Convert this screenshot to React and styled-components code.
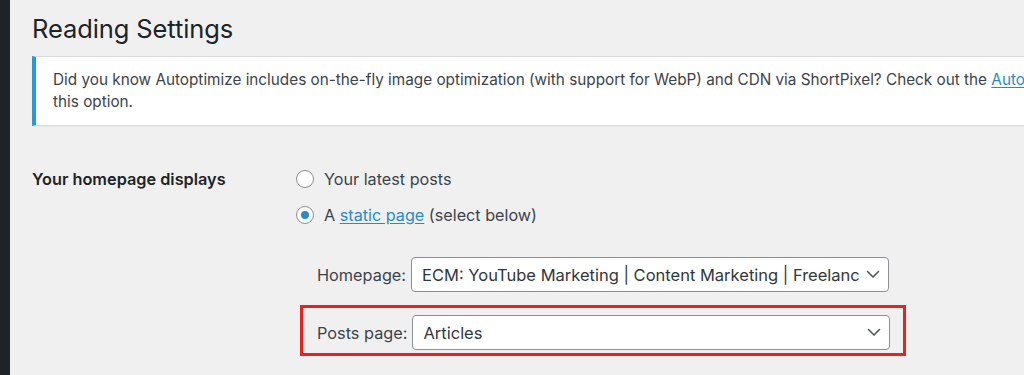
import React from 'react';
import styled, { createGlobalStyle } from 'styled-components';

const GlobalStyle = createGlobalStyle`
  html, body {
    margin: 0;
    padding: 0;
    background: #f0f0f1;
    overflow: hidden;
  }
  body {
    font-family: Inter, 'Liberation Sans', sans-serif;
    color: #3c434a;
  }
`;

const Page = styled.div`
  display: flex;
  width: 1400px;
  min-height: 375px;
  background: #f0f0f1;
`;

const Sidebar = styled.div`
  width: 10px;
  flex-shrink: 0;
  background: #1d2327;
`;

const Content = styled.main`
  flex: 1;
  padding: 13px 20px 0 22px;
`;

const Title = styled.h1`
  margin: 0;
  font-size: 25.5px;
  font-weight: 400;
  line-height: 32px;
  color: #1d2327;
  letter-spacing: -0.1px;
`;

const Notice = styled.div`
  margin-top: 11px;
  background: #fff;
  border: 1px solid #dcdcde;
  border-left: 4px solid #2a9bd1;
  box-shadow: 0 1px 1px rgba(0, 0, 0, 0.04);
  padding: 12px 17px 12px 17px;
  font-size: 15.3px;
  line-height: 22px;
  color: #3c434a;
  white-space: nowrap;
`;

const Link = styled.a`
  color: #2a8bc4;
  text-decoration: underline;
  text-underline-offset: 2px;
`;

const FormTable = styled.div`
  display: grid;
  grid-template-columns: 264px 1fr;
  margin-top: 42px;
`;

const RowLabel = styled.div`
  font-size: 16.3px;
  font-weight: 600;
  color: #1d2327;
  line-height: 22px;
`;

const Field = styled.div`
  display: flex;
  flex-direction: column;
`;

const RadioRow = styled.label`
  display: flex;
  align-items: center;
  gap: 10px;
  height: 22px;
  margin-bottom: ${(p) => (p.last ? '0' : '14px')};
  font-size: 16.2px;
  color: #3c434a;
`;

const Radio = styled.span`
  width: 16px;
  height: 16px;
  border-radius: 50%;
  border: 1px solid #8c8f94;
  background: #fff;
  display: flex;
  align-items: center;
  justify-content: center;
  flex-shrink: 0;

  &::after {
    content: '';
    display: ${(p) => (p.checked ? 'block' : 'none')};
    width: 8px;
    height: 8px;
    border-radius: 50%;
    background: #2a8bc4;
  }
`;

const PageSelects = styled.div`
  margin-top: 31px;
  margin-left: 21px;
`;

const SelectRow = styled.div`
  display: flex;
  align-items: center;
  gap: 5px;
  font-size: 16.3px;
  color: #3c434a;
`;

const Highlight = styled.div`
  box-sizing: border-box;
  margin: 13px 0 0 -17px;
  width: 606px;
  border: 3px solid #e8231f;
  padding: 7px 0 3px 14px;
`;

const Select = styled.div`
  display: flex;
  align-items: center;
  width: ${(p) => p.width}px;
  height: 35px;
  box-sizing: border-box;
  background: #fff;
  border: 1px solid #8c8f94;
  border-radius: 4px;
  padding: 0 8px 0 10px;
  font-size: 16.5px;
  color: #32373c;
`;

const SelectText = styled.span`
  flex: 1;
  overflow: hidden;
  white-space: nowrap;
`;

const Chevron = () => (
  <svg width="14" height="9" viewBox="0 0 14 9" style={{ marginLeft: 6, flexShrink: 0 }}>
    <path d="M1.5 1.5 L7 7 L12.5 1.5" fill="none" stroke="#50575e" strokeWidth="1.6" strokeLinecap="round" strokeLinejoin="round" />
  </svg>
);

export default function App() {
  return (
    <>
      <GlobalStyle />
      <Page>
        <Sidebar />
        <Content>
          <Title>Reading Settings</Title>
          <Notice>
            Did you know Autoptimize includes on-the-fly image optimization (with support for WebP) and CDN via ShortPixel? Check out the{' '}
            <Link href="#">Autoptimize Image settings</Link> to activate
            <br />
            this option.
          </Notice>

          <FormTable>
            <RowLabel>Your homepage displays</RowLabel>
            <Field>
              <RadioRow>
                <Radio />
                Your latest posts
              </RadioRow>
              <RadioRow last>
                <Radio checked />
                <span>
                  A <Link href="#">static page</Link> (select below)
                </span>
              </RadioRow>

              <PageSelects>
                <SelectRow>
                  Homepage:
                  <Select width={478}>
                    <SelectText>ECM: YouTube Marketing | Content Marketing | Freelance Writing</SelectText>
                    <Chevron />
                  </Select>
                </SelectRow>
                <Highlight>
                  <SelectRow>
                    Posts page:
                    <Select width={478}>
                      <SelectText>Articles</SelectText>
                      <Chevron />
                    </Select>
                  </SelectRow>
                </Highlight>
              </PageSelects>
            </Field>
          </FormTable>
        </Content>
      </Page>
    </>
  );
}
